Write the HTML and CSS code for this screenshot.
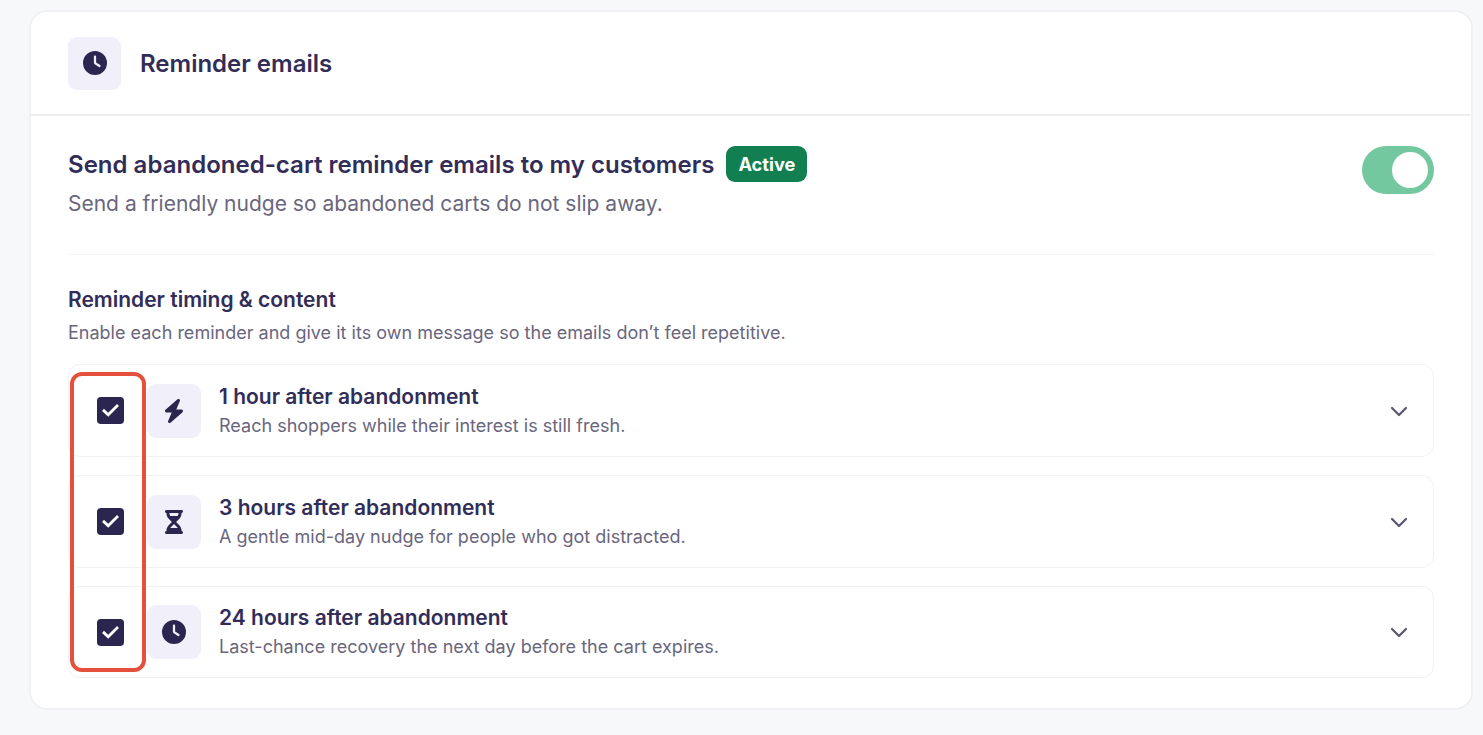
FILE: index.html
```html
<!DOCTYPE html>
<html lang="en">
<head>
    <meta charset="UTF-8">
    <meta name="viewport" content="width=device-width, initial-scale=1.0">
    <title>Reminder emails</title>
    <link rel="stylesheet" href="styles.css">
</head>
<body>
    <section class="card">
        <header class="card-header">
            <div class="icon-box">
                <svg width="24" height="24" viewBox="0 0 512 512"><path fill="#2b2650" d="M256 0a256 256 0 1 1 0 512A256 256 0 1 1 256 0zM232 120V256c0 8 4 15.500 10.700 20l96 64c11 7.400 25.900 4.400 33.300-6.700s4.400-25.900-6.700-33.300L280 243.200V120c0-13.300-10.700-24-24-24s-24 10.700-24 24z"/></svg>
            </div>
            <h2 class="card-title">Reminder emails</h2>
        </header>

        <div class="card-body">
            <div class="setting">
                <div class="setting-text">
                    <div class="setting-heading">
                        <h3 class="setting-title">Send abandoned-cart reminder emails to my customers</h3>
                        <span class="badge">Active</span>
                    </div>
                    <p class="setting-desc">Send a friendly nudge so abandoned carts do not slip away.</p>
                </div>
                <div class="toggle"><span class="toggle-knob"></span></div>
            </div>

            <h4 class="timing-title">Reminder timing &amp; content</h4>
            <p class="timing-desc">Enable each reminder and give it its own message so the emails don’t feel repetitive.</p>

            <div class="reminders">
                <div class="highlight"></div>

                <div class="reminder">
                    <div class="checkbox">
                        <svg width="27" height="27" viewBox="0 0 27 27"><path fill="none" stroke="#fff" stroke-width="2.800" d="M6 12.900l5.200 4.800 9.800-9.600"/></svg>
                    </div>
                    <div class="icon-box">
                        <svg width="22" height="24" viewBox="0 0 448 512"><path fill="#2b2650" d="M349.400 44.600c5.900-13.700 1.500-29.700-10.600-38.500s-28.600-8-39.900 1.800l-256 224c-10 8.800-13.600 22.900-8.900 35.300S50.700 288 64 288H175.500L98.600 467.400c-5.900 13.700-1.500 29.700 10.600 38.500s28.600 8 39.900-1.800l256-224c10-8.800 13.600-22.900 8.900-35.300s-16.600-20.700-30-20.700H272.500L349.400 44.600z"/></svg>
                    </div>
                    <div class="reminder-text">
                        <div class="reminder-title">1 hour after abandonment</div>
                        <div class="reminder-desc">Reach shoppers while their interest is still fresh.</div>
                    </div>
                    <svg class="chevron" width="18" height="12" viewBox="0 0 18 12"><path fill="none" stroke="#5c5873" stroke-width="2.300" stroke-linecap="round" stroke-linejoin="round" d="M2 3l7 7 7-7"/></svg>
                </div>

                <div class="reminder">
                    <div class="checkbox">
                        <svg width="27" height="27" viewBox="0 0 27 27"><path fill="none" stroke="#fff" stroke-width="2.800" d="M6 12.900l5.200 4.800 9.800-9.600"/></svg>
                    </div>
                    <div class="icon-box">
                        <svg width="18" height="24" viewBox="0 0 384 512"><path fill="#2b2650" d="M32 0C14.300 0 0 14.300 0 32S14.300 64 32 64V75c0 42.400 16.900 83.100 46.900 113.100L146.700 256 78.900 323.900C48.900 353.900 32 394.600 32 437v11c-17.700 0-32 14.300-32 32s14.300 32 32 32H352c17.700 0 32-14.300 32-32s-14.300-32-32-32V437c0-42.400-16.900-83.100-46.900-113.100L237.300 256l67.900-67.900c30-30 46.900-70.700 46.900-113.100V64c17.700 0 32-14.300 32-32s-14.300-32-32-32H32zM96 75V64H288V75c0 19-5.600 37.400-16 53H112c-10.300-15.600-16-34-16-53zm16 309c3.500-5.300 7.600-10.300 12.100-14.900L192 301.300l67.900 67.900c4.600 4.600 8.600 9.600 12.100 14.900H112z"/></svg>
                    </div>
                    <div class="reminder-text">
                        <div class="reminder-title">3 hours after abandonment</div>
                        <div class="reminder-desc">A gentle mid-day nudge for people who got distracted.</div>
                    </div>
                    <svg class="chevron" width="18" height="12" viewBox="0 0 18 12"><path fill="none" stroke="#5c5873" stroke-width="2.300" stroke-linecap="round" stroke-linejoin="round" d="M2 3l7 7 7-7"/></svg>
                </div>

                <div class="reminder">
                    <div class="checkbox">
                        <svg width="27" height="27" viewBox="0 0 27 27"><path fill="none" stroke="#fff" stroke-width="2.800" d="M6 12.900l5.200 4.800 9.800-9.600"/></svg>
                    </div>
                    <div class="icon-box">
                        <svg width="24" height="24" viewBox="0 0 512 512"><path fill="#2b2650" d="M256 0a256 256 0 1 1 0 512A256 256 0 1 1 256 0zM232 120V256c0 8 4 15.500 10.700 20l96 64c11 7.400 25.900 4.400 33.300-6.700s4.400-25.900-6.700-33.300L280 243.200V120c0-13.300-10.700-24-24-24s-24 10.700-24 24z"/></svg>
                    </div>
                    <div class="reminder-text">
                        <div class="reminder-title">24 hours after abandonment</div>
                        <div class="reminder-desc">Last-chance recovery the next day before the cart expires.</div>
                    </div>
                    <svg class="chevron" width="18" height="12" viewBox="0 0 18 12"><path fill="none" stroke="#5c5873" stroke-width="2.300" stroke-linecap="round" stroke-linejoin="round" d="M2 3l7 7 7-7"/></svg>
                </div>
            </div>
        </div>
    </section>
</body>
</html>
```
FILE: styles.css
```css
* {
    box-sizing: border-box;
}

body {
    font-family: Inter, sans-serif;
    background-color: #f6f8fa;
    color: #322d58;
    margin: 0;
    padding: 10px 10px 25px 29px;
    height: 735px;
}

h2, h3, h4, p {
    margin: 0;
    font-weight: 600;
}

svg {
    display: block;
}

.card {
    height: 700px;
    background-color: #fff;
    border: 2px solid #f1f1f3;
    border-radius: 18px;
}

.card-header {
    display: flex;
    align-items: center;
    gap: 19px;
    height: 104px;
    padding: 0 37px;
    border-bottom: 2px solid #efeff1;
}

.icon-box {
    display: flex;
    align-items: center;
    justify-content: center;
    flex-shrink: 0;
    width: 54px;
    height: 54px;
    background-color: #f0effa;
    border-radius: 9px;
}

.card-header .icon-box {
    width: 53px;
    height: 53px;
}

.card-title {
    padding-top: 2px;
    font-size: 24px;
    line-height: 36px;
}

.card-body {
    padding: 30px 37px 0 37px;
}

.setting {
    display: flex;
    justify-content: space-between;
    height: 109px;
    border-bottom: 1px solid #f3f3f5;
}

.setting-heading {
    display: flex;
    align-items: center;
    gap: 12px;
    height: 36px;
}

.setting-title {
    padding-top: 2px;
    font-size: 24px;
    letter-spacing: 0.02px;
    line-height: 36px;
    white-space: nowrap;
}

.badge {
    height: 36px;
    padding: 0 12px;
    background-color: #117f50;
    color: #fff;
    font-size: 18.200px;
    font-weight: 700;
    line-height: 36px;
    border-radius: 9px;
}

.setting-desc {
    margin-top: 5px;
    color: #69667e;
    font-size: 21px;
    font-weight: 400;
    line-height: 33px;
}

.toggle {
    display: flex;
    justify-content: flex-end;
    width: 72px;
    height: 48px;
    padding: 6px;
    background-color: #74c89f;
    border-radius: 24px;
}

.toggle-knob {
    width: 36px;
    height: 36px;
    background-color: #fff;
    border-radius: 50%;
}

.timing-title {
    margin-top: 29px;
    font-size: 21px;
    line-height: 32px;
}

.timing-desc {
    margin-top: 3px;
    color: #69667e;
    font-size: 18px;
    font-weight: 400;
    letter-spacing: 0.01px;
    line-height: 28px;
}

.reminders {
    position: relative;
    display: flex;
    flex-direction: column;
    gap: 18px;
    margin-top: 17px;
}

.reminder {
    display: flex;
    align-items: center;
    height: 93px;
    padding: 0 25px 0 28px;
    border: 1px solid #f2f2f4;
    border-radius: 12px;
}

.reminder:last-child {
    height: 92px;
}

.checkbox {
    width: 27px;
    height: 27px;
    margin-right: 23px;
    background-color: #2b2650;
    border-radius: 4px;
}

.reminder-text {
    flex-grow: 1;
    padding-left: 18px;
}

.reminder-title {
    font-size: 21px;
    font-weight: 600;
    line-height: 30px;
}

.reminder-desc {
    color: #69667e;
    font-size: 18px;
    letter-spacing: 0.01px;
    line-height: 28px;
}

/* Outline laid over the checkbox column */
.highlight {
    position: absolute;
    top: 8px;
    left: 2px;
    width: 76px;
    height: 300px;
    border: 4px solid #e5503c;
    border-radius: 12px;
}
```
